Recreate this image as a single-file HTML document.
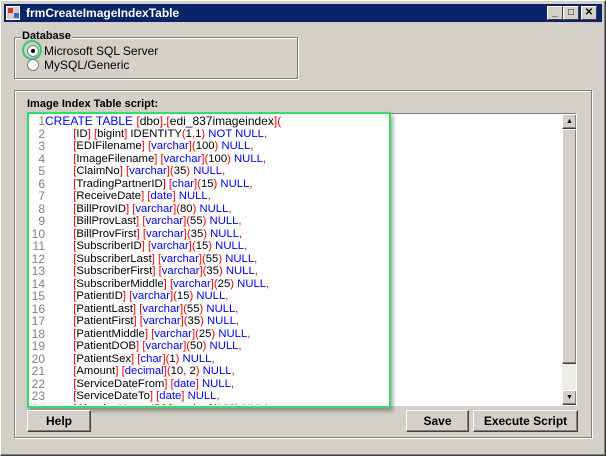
<!DOCTYPE html>
<html><head><style>
*{margin:0;padding:0;box-sizing:border-box}
body{width:606px;height:456px;overflow:hidden;background:#d4d0c8;font-family:"Liberation Sans",Arial,sans-serif;position:relative}
.win{position:absolute;left:0;top:0;width:606px;height:456px;border:1px solid #fff;border-right-color:#404040;border-bottom-color:#404040;box-shadow:inset -1px -1px #808080,inset 1px 1px #d4d0c8}
.title{position:absolute;left:4px;top:4px;width:598px;height:18px;background:#0a246a;color:#fff;font-weight:bold;font-size:12px;line-height:18px;padding-left:22px}
.tb{position:absolute;top:6px;width:16px;height:14px;background:#d4d0c8;border:1px solid #fff;border-right-color:#404040;border-bottom-color:#404040;font-size:10px;color:#000;text-align:center;line-height:12px;font-weight:bold}
.grp{position:absolute;border:1px solid #808080;box-shadow:1px 1px #fff,inset 1px 1px #fff}
.lbl{position:absolute;font-size:11px;font-weight:bold;background:#d4d0c8;padding:0 1px}
.rad{position:absolute;width:12px;height:12px;border-radius:50%;background:#fff;border:1px solid #808080}
.txt{position:absolute;font-size:12px}
.ta{position:absolute;left:28px;top:113px;width:549px;height:293px;background:#fff;border:1px solid #808080;border-right-color:#fff;border-bottom-color:#fff;overflow:hidden}
.code{position:absolute;left:0;top:1px;font-size:12px;line-height:12.5px;white-space:pre}
.ln{position:absolute;left:2px;color:#808080;width:14px;text-align:right}
.l{position:absolute;left:16px;color:#000;font-size:11.3px}
.l.f{font-size:12px}
.r{color:#f00}.b{color:#00f}
.btn{position:absolute;height:22px;background:#d4d0c8;border:1px solid #fff;border-right-color:#404040;border-bottom-color:#404040;box-shadow:inset -1px -1px #808080;font-size:12px;font-weight:bold;text-align:center;line-height:20px}
</style></head><body>
<div class="win"></div>
<div class="title">frmCreateImageIndexTable</div>
<div style="position:absolute;left:6px;top:6px;width:14px;height:14px;background:#d4d0c8;border:1px solid #fff"><div style="position:absolute;left:1px;top:1px;width:5px;height:5px;background:#c33"></div><div style="position:absolute;left:7px;top:6px;width:5px;height:5px;background:#36c"></div></div>
<div class="tb" style="left:547px">_</div><div class="tb" style="left:563px">□</div><div class="tb" style="left:581px">✕</div>
<div class="grp" style="left:14px;top:37px;width:284px;height:42px"></div>
<div class="lbl" style="left:21px;top:30px">Database</div>
<div class="rad" style="left:27px;top:45px"><div style="position:absolute;left:3px;top:3px;width:4px;height:4px;background:#000;border-radius:50%"></div></div>
<div style="position:absolute;left:22px;top:40px;width:20px;height:20px;border:2px solid #3c6;border-radius:50%"></div>
<div class="txt" style="left:44px;top:44px">Microsoft SQL Server</div>
<div class="rad" style="left:27px;top:59px"></div>
<div class="txt" style="left:44px;top:58px">MySQL/Generic</div>
<div class="grp" style="left:14px;top:90px;width:578px;height:348px"></div>
<div class="lbl" style="left:26px;top:98px">Image Index Table script:</div>
<div class="ta">
<div class="code">
<div class="ln" style="top:0">1</div><div class="l f" style="top:0"><span class="b">CREATE TABLE </span><span class="r">[</span>dbo<span class="r">]</span>.<span class="r">[</span>edi_837imageindex<span class="r">](</span></div>
<div class="ln" style="top:12.5px">2</div><div class="l" style="top:12.5px">         <span class="r">[</span>ID<span class="r">] [</span>bigint<span class="r">]</span> IDENTITY<span class="r">(</span>1<span class="r">,</span>1<span class="r">)</span> <span class="b">NOT NULL</span><span class="r">,</span></div>
<div class="ln" style="top:25px">3</div><div class="l" style="top:25px">         <span class="r">[</span>EDIFilename<span class="r">] [</span><span class="b">varchar</span><span class="r">](</span>100<span class="r">)</span> <span class="b">NULL</span><span class="r">,</span></div>
<div class="ln" style="top:37.5px">4</div><div class="l" style="top:37.5px">         <span class="r">[</span>ImageFilename<span class="r">] [</span><span class="b">varchar</span><span class="r">](</span>100<span class="r">)</span> <span class="b">NULL</span><span class="r">,</span></div>
<div class="ln" style="top:50px">5</div><div class="l" style="top:50px">         <span class="r">[</span>ClaimNo<span class="r">] [</span><span class="b">varchar</span><span class="r">](</span>35<span class="r">)</span> <span class="b">NULL</span><span class="r">,</span></div>
<div class="ln" style="top:62.5px">6</div><div class="l" style="top:62.5px">         <span class="r">[</span>TradingPartnerID<span class="r">] [</span><span class="b">char</span><span class="r">](</span>15<span class="r">)</span> <span class="b">NULL</span><span class="r">,</span></div>
<div class="ln" style="top:75px">7</div><div class="l" style="top:75px">         <span class="r">[</span>ReceiveDate<span class="r">] [</span><span class="b">date</span><span class="r">]</span> <span class="b">NULL</span><span class="r">,</span></div>
<div class="ln" style="top:87.5px">8</div><div class="l" style="top:87.5px">         <span class="r">[</span>BillProvID<span class="r">] [</span><span class="b">varchar</span><span class="r">](</span>80<span class="r">)</span> <span class="b">NULL</span><span class="r">,</span></div>
<div class="ln" style="top:100px">9</div><div class="l" style="top:100px">         <span class="r">[</span>BillProvLast<span class="r">] [</span><span class="b">varchar</span><span class="r">](</span>55<span class="r">)</span> <span class="b">NULL</span><span class="r">,</span></div>
<div class="ln" style="top:112.5px">10</div><div class="l" style="top:112.5px">         <span class="r">[</span>BillProvFirst<span class="r">] [</span><span class="b">varchar</span><span class="r">](</span>35<span class="r">)</span> <span class="b">NULL</span><span class="r">,</span></div>
<div class="ln" style="top:125px">11</div><div class="l" style="top:125px">         <span class="r">[</span>SubscriberID<span class="r">] [</span><span class="b">varchar</span><span class="r">](</span>15<span class="r">)</span> <span class="b">NULL</span><span class="r">,</span></div>
<div class="ln" style="top:137.5px">12</div><div class="l" style="top:137.5px">         <span class="r">[</span>SubscriberLast<span class="r">] [</span><span class="b">varchar</span><span class="r">](</span>55<span class="r">)</span> <span class="b">NULL</span><span class="r">,</span></div>
<div class="ln" style="top:150px">13</div><div class="l" style="top:150px">         <span class="r">[</span>SubscriberFirst<span class="r">] [</span><span class="b">varchar</span><span class="r">](</span>35<span class="r">)</span> <span class="b">NULL</span><span class="r">,</span></div>
<div class="ln" style="top:162.5px">14</div><div class="l" style="top:162.5px">         <span class="r">[</span>SubscriberMiddle<span class="r">] [</span><span class="b">varchar</span><span class="r">](</span>25<span class="r">)</span> <span class="b">NULL</span><span class="r">,</span></div>
<div class="ln" style="top:175px">15</div><div class="l" style="top:175px">         <span class="r">[</span>PatientID<span class="r">] [</span><span class="b">varchar</span><span class="r">](</span>15<span class="r">)</span> <span class="b">NULL</span><span class="r">,</span></div>
<div class="ln" style="top:187.5px">16</div><div class="l" style="top:187.5px">         <span class="r">[</span>PatientLast<span class="r">] [</span><span class="b">varchar</span><span class="r">](</span>55<span class="r">)</span> <span class="b">NULL</span><span class="r">,</span></div>
<div class="ln" style="top:200px">17</div><div class="l" style="top:200px">         <span class="r">[</span>PatientFirst<span class="r">] [</span><span class="b">varchar</span><span class="r">](</span>35<span class="r">)</span> <span class="b">NULL</span><span class="r">,</span></div>
<div class="ln" style="top:212.5px">18</div><div class="l" style="top:212.5px">         <span class="r">[</span>PatientMiddle<span class="r">] [</span><span class="b">varchar</span><span class="r">](</span>25<span class="r">)</span> <span class="b">NULL</span><span class="r">,</span></div>
<div class="ln" style="top:225px">19</div><div class="l" style="top:225px">         <span class="r">[</span>PatientDOB<span class="r">] [</span><span class="b">varchar</span><span class="r">](</span>50<span class="r">)</span> <span class="b">NULL</span><span class="r">,</span></div>
<div class="ln" style="top:237.5px">20</div><div class="l" style="top:237.5px">         <span class="r">[</span>PatientSex<span class="r">] [</span><span class="b">char</span><span class="r">](</span>1<span class="r">)</span> <span class="b">NULL</span><span class="r">,</span></div>
<div class="ln" style="top:250px">21</div><div class="l" style="top:250px">         <span class="r">[</span>Amount<span class="r">] [</span><span class="b">decimal</span><span class="r">](</span>10<span class="r">,</span> 2<span class="r">)</span> <span class="b">NULL</span><span class="r">,</span></div>
<div class="ln" style="top:262.5px">22</div><div class="l" style="top:262.5px">         <span class="r">[</span>ServiceDateFrom<span class="r">] [</span><span class="b">date</span><span class="r">]</span> <span class="b">NULL</span><span class="r">,</span></div>
<div class="ln" style="top:275px">23</div><div class="l" style="top:275px">         <span class="r">[</span>ServiceDateTo<span class="r">] [</span><span class="b">date</span><span class="r">]</span> <span class="b">NULL</span><span class="r">,</span></div>
<div class="ln" style="top:287.5px">24</div><div class="l" style="top:287.5px">         <span class="r">[</span>ClearingHouseID<span class="r">] [</span><span class="b">varchar</span><span class="r">](</span>100<span class="r">)</span> <span class="b">NULL</span><span class="r">,</span></div>
</div>
<div style="position:absolute;left:533px;top:0;width:15px;height:291px;background:#eeede9"></div>
<div class="btn" style="left:533px;top:0;width:15px;height:15px;font-size:7px;line-height:13px">▲</div>
<div class="btn" style="left:533px;top:15px;width:15px;height:235px"></div>
<div class="btn" style="left:533px;top:276px;width:15px;height:15px;font-size:7px;line-height:13px">▼</div>
</div>
<div style="position:absolute;left:27px;top:112px;width:364px;height:296px;border:2px solid #3d6;box-shadow:2px 3px 4px rgba(0,0,0,0.35)"></div>
<div class="btn" style="left:27px;top:410px;width:64px">Help</div>
<div class="btn" style="left:406px;top:410px;width:63px">Save</div>
<div class="btn" style="left:473px;top:410px;width:105px">Execute Script</div>
</body></html>
